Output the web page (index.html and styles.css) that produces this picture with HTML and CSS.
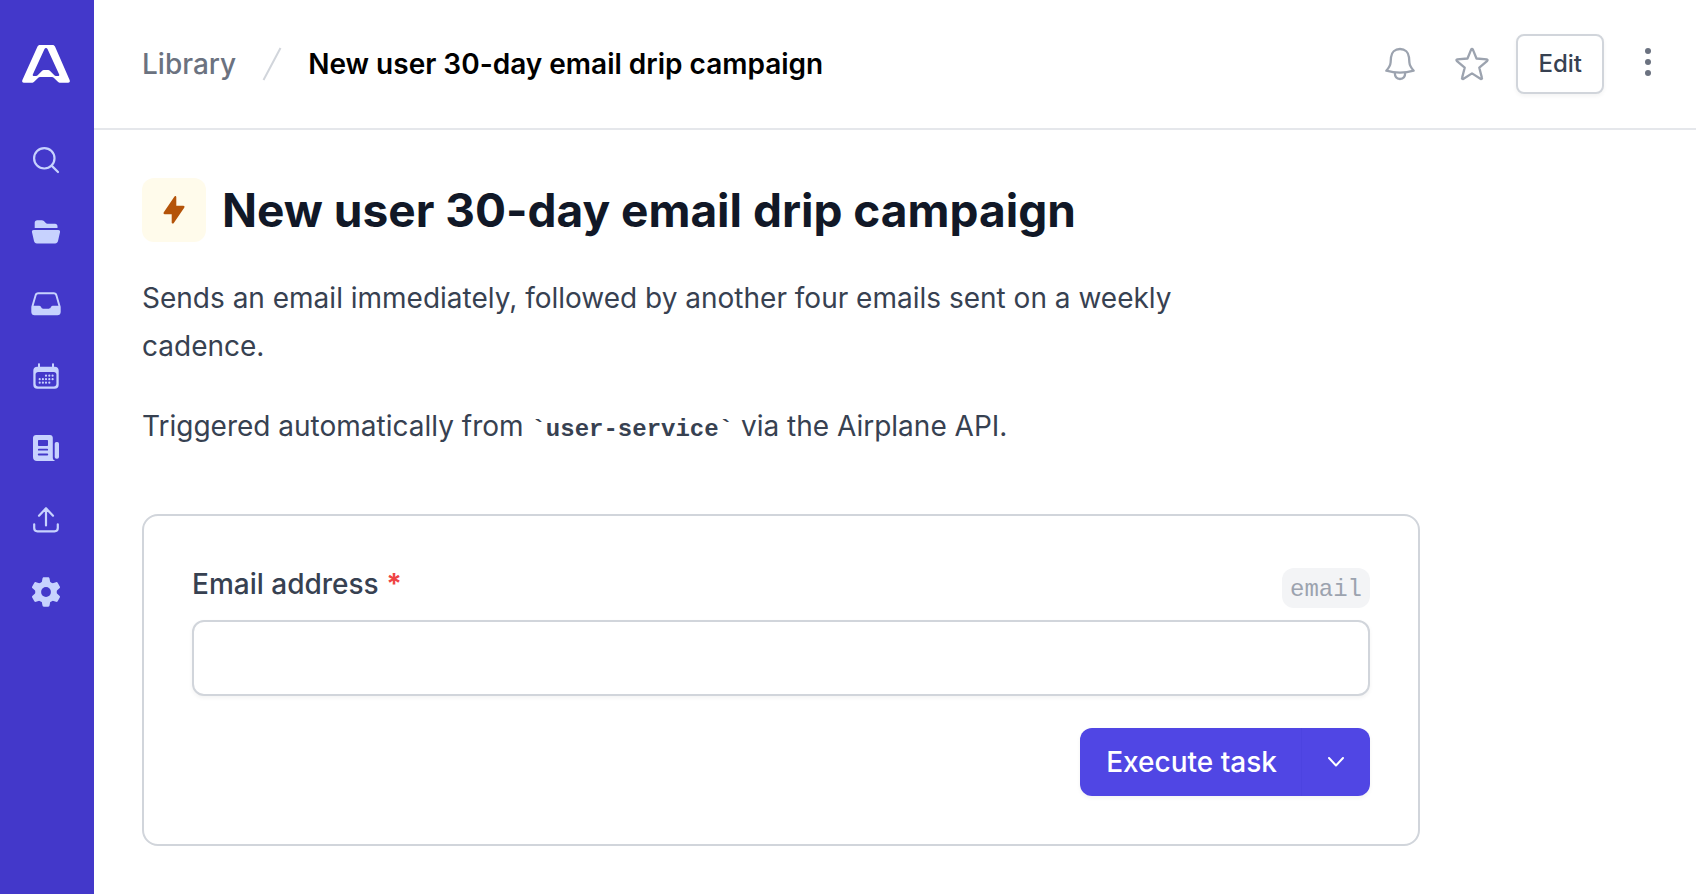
FILE: index.html
```html
<!DOCTYPE html>
<html lang="en">
<head>
  <meta charset="UTF-8">
  <meta name="viewport" content="width=device-width, initial-scale=1">
  <title>New user 30-day email drip campaign</title>
  <link rel="stylesheet" href="styles.css">
</head>
<body>
  <div class="app">
    <!-- Sidebar -->
    <nav class="sidebar" aria-label="Main">
      <a class="logo" href="#" aria-label="Home">
        <svg width="48" height="40" viewBox="0 0 48 40" fill="currentColor">
          <path fill-rule="evenodd" d="M18 1h12.500c1.200 0 2 .6 2.600 1.700L47.600 36c.7 1.600 0 2.700-1.600 2.700h-7.500c-1.300 0-2-.3-2.900-1.200L32 34c-.8-.8-1.500-1-2.600-1H18.600c-1.100 0-1.800.2-2.600 1l-3.600 3.500c-.9.900-1.600 1.200-2.900 1.200H2c-1.600 0-2.300-1.100-1.600-2.700L15.400 2.700C16 1.600 16.800 1 18 1zM22.500 5 10.800 30.500c-.4.9.2 1.500 1.200 1.500h2c.8 0 1.300-.3 1.900-.9l4-4.200c.6-.6 1.200-.9 2-.9h4.200c.8 0 1.400.3 2 .9l4 4.200c.6.6 1.100.9 1.900.9h2c1 0 1.600-.6 1.200-1.500L25.500 5c-.6-1.300-2.400-1.300-3 0z"/>
        </svg>
      </a>
      <a class="nav-item" href="#" aria-label="Search">
        <svg viewBox="0 0 32 32" fill="none" stroke="currentColor" stroke-width="2.200" stroke-linecap="round">
          <circle cx="14.300" cy="14.300" r="10.200"/>
          <path d="M21.600 21.600l6.400 6.400"/>
        </svg>
      </a>
      <a class="nav-item" href="#" aria-label="Library">
        <svg viewBox="0 0 32 32" fill="currentColor">
          <path d="M4.700 12V6.800c0-1.500 1-2.500 2.500-2.500h4.600c.9 0 1.500.2 2.100.8l1.900 1.900c.4.400.9.700 1.600.7h7.600c1.500 0 2.500 1 2.500 2.500V12z"/>
          <path d="M3.800 14h24.400c1.400 0 2.100.9 1.800 2.200l-2 8.900c-.4 1.600-1.300 2.400-2.900 2.400H6.900c-1.600 0-2.500-.8-2.900-2.400l-2-8.900C1.700 14.900 2.400 14 3.800 14z"/>
        </svg>
      </a>
      <a class="nav-item" href="#" aria-label="Inbox">
        <svg viewBox="0 0 32 32" fill="currentColor">
          <path fill-rule="evenodd" d="M8.300 4.300h15.400c1.900 0 3.200 1 3.600 2.800l3.100 10.700c.2.500.3 1 .3 1.500V24c0 2-1.300 3.300-3.300 3.300H4.600c-2 0-3.300-1.300-3.300-3.300v-4.700c0-.5.100-1 .3-1.500L4.700 7.100c.4-1.800 1.700-2.800 3.600-2.800zm.2 2c-1.100 0-1.800.5-2.100 1.600L3.600 17.700h5.600c.8 0 1.300.3 1.700 1l.6 1.100c.4.700.9.900 1.700.9h5.600c.8 0 1.300-.2 1.700-.9l.6-1.100c.4-.7.9-1 1.700-1h5.600L25.600 7.900c-.3-1.100-1-1.600-2.100-1.600z"/>
        </svg>
      </a>
      <a class="nav-item" href="#" aria-label="Schedules">
        <svg viewBox="0 0 32 32" fill="currentColor">
          <path fill-rule="evenodd" d="M9 3.300c.6 0 1 .4 1 1v2.400h12V4.300c0-.6.400-1 1-1s1 .4 1 1v2.400h.700c2.500 0 4 1.500 4 4v14c0 2.500-1.500 4-4 4H7.300c-2.500 0-4-1.500-4-4v-14c0-2.500 1.500-4 4-4H8V4.300c0-.6.4-1 1-1zM8.200 12c-1.600 0-2.600 1-2.600 2.600v9.100c0 1.600 1 2.700 2.600 2.700h15.600c1.600 0 2.600-1.100 2.600-2.700v-9.100c0-1.600-1-2.600-2.600-2.600z"/>
          <path fill="none" stroke="currentColor" stroke-width="2.200" stroke-linecap="round" d="M16 15.700h0M19.300 15.700h0M22.600 15.700h0M9.700 19.200h0M12.900 19.200h0M16 19.200h0M19.300 19.200h0M22.600 19.200h0M9.700 22.700h0M12.900 22.700h0M16 22.700h0M19.300 22.700h0"/>
        </svg>
      </a>
      <a class="nav-item" href="#" aria-label="Activity">
        <svg viewBox="0 0 32 32" fill="currentColor">
          <path fill-rule="evenodd" d="M6 3h14c1.700 0 2.800 1.100 2.800 2.800v20c0 1.500.9 2.500 2.400 3.200H7c-2.500 0-4-1.500-4-4V5.800C3 4.100 4.300 3 6 3zM9 8c-.6 0-1 .4-1 1v4c0 .6.4 1 1 1h8c.6 0 1-.4 1-1V9c0-.6-.4-1-1-1zm-.2 8.800a.9.900 0 000 1.800h8.400a.9.900 0 000-1.800zm0 4.700a1 1 0 000 2h8.400a1 1 0 000-2z"/>
          <rect x="24.700" y="10" width="4.300" height="16.700" rx="1.800"/>
        </svg>
      </a>
      <a class="nav-item" href="#" aria-label="Upload">
        <svg viewBox="0 0 32 32" fill="none" stroke="currentColor" stroke-width="2.200" stroke-linecap="round" stroke-linejoin="round">
          <path d="M16 21.500V4.300M9 11.700l7-7.400 7 7.400M4.200 20.300V24c0 2 1.300 3.300 3.300 3.300h17c2 0 3.300-1.300 3.300-3.300v-3.700"/>
        </svg>
      </a>
      <a class="nav-item" href="#" aria-label="Settings">
        <svg viewBox="0 0 32 32">
          <path fill="none" stroke="currentColor" stroke-width="7" d="M23.300 16a7.300 7.300 0 10-14.600 0 7.300 7.300 0 0014.600 0z"/>
          <g fill="currentColor">
            <path id="tooth" d="M11.500 7.500l1-5c.2-.8.600-1.200 1.400-1.200h4.200c.8 0 1.200.4 1.400 1.200l1 5-2 2h-5z"/>
            <use href="#tooth" transform="rotate(60 16 16)"/>
            <use href="#tooth" transform="rotate(120 16 16)"/>
            <use href="#tooth" transform="rotate(180 16 16)"/>
            <use href="#tooth" transform="rotate(240 16 16)"/>
            <use href="#tooth" transform="rotate(300 16 16)"/>
          </g>
          <circle class="gear-hole" cx="16" cy="16" r="4.900"/>
        </svg>
      </a>
    </nav>

    <div class="main">
      <!-- Header -->
      <header class="header">
        <div class="breadcrumbs">
          <a class="crumb" href="#">Library</a>
          <svg class="slash" width="20" height="32" viewBox="0 0 20 32" fill="none" stroke="currentColor" stroke-width="2">
            <path d="M18.500 0 1.500 32"/>
          </svg>
          <span class="crumb-current">New user 30-day email drip campaign</span>
        </div>
        <div class="actions">
          <div class="toggles">
            <button class="icon-button" type="button" aria-label="Notifications">
              <svg viewBox="0 0 32 32" fill="none" stroke="currentColor" stroke-width="2.300" stroke-linejoin="round">
                <path d="M16 1c5 0 8.600 3.300 9 8.300l.4 5.200c.2 3 1.200 4.700 4.300 8.200-9 2.600-18.400 2.600-27.400 0 3.100-3.500 4.100-5.200 4.300-8.200L7 9.300C7.400 4.300 11 1 16 1z"/>
                <path d="M10.800 24.600c0 3.800 1.900 6.400 5.200 6.400s5.200-2.600 5.200-6.400"/>
              </svg>
            </button>
            <button class="icon-button" type="button" aria-label="Star">
              <svg viewBox="0 0 32 32" fill="none" stroke="currentColor" stroke-width="2.300" stroke-linejoin="round">
                <path d="M15.200 1.400c.3-.6 1.300-.6 1.600 0l3.700 9.100 10.300.8c.8.100 1 1 .5 1.500l-8 6.900 2.700 10.400c.2.700-.6 1.200-1.200.9L16 25.400 7.200 31c-.6.300-1.400-.2-1.200-.9l2.700-10.400-8-6.900c-.5-.5-.3-1.400.5-1.500l10.300-.8z"/>
              </svg>
            </button>
          </div>
          <button class="edit-button" type="button">Edit</button>
          <button class="icon-button more" type="button" aria-label="More">
            <svg viewBox="0 0 32 32" fill="currentColor">
              <circle cx="16" cy="3" r="3"/>
              <circle cx="16" cy="14" r="3"/>
              <circle cx="16" cy="25" r="3"/>
            </svg>
          </button>
        </div>
      </header>

      <!-- Task -->
      <main class="content">
        <div class="title-row">
          <span class="task-icon">
            <svg width="32" height="32" viewBox="0 0 32 32" fill="currentColor">
              <path d="M16.300 2.700c.7-1 2-.7 2 .5v8.600h7c1.100 0 1.600.9.900 1.900L15.800 29c-.7 1-2.100.7-2.100-.5v-8.300h-7c-1.100 0-1.600-.9-.9-1.900z"/>
            </svg>
          </span>
          <h1>New user 30-day email drip campaign</h1>
        </div>

        <div class="description">
          <p>Sends an email immediately, followed by another four emails sent on a weekly cadence.</p>
          <p>Triggered automatically from <code>`user-service`</code> via the Airplane API.</p>
        </div>

        <form class="card">
          <div class="field-head">
            <label for="email">Email address <span class="required">*</span></label>
            <code class="slug">email</code>
          </div>
          <input class="text-input" type="text" id="email" required>
          <div class="form-actions">
            <div class="split-button">
              <button class="execute" type="button">Execute task</button>
              <button class="dropdown" type="button" aria-label="More options">
                <svg width="16" height="10" viewBox="0 0 16 10" fill="none" stroke="currentColor" stroke-width="2" stroke-linecap="round" stroke-linejoin="round">
                  <path d="M1 1l7 7.500L15 1"/>
                </svg>
              </button>
            </div>
          </div>
        </form>
      </main>
    </div>
  </div>
</body>
</html>
```
FILE: styles.css
```css
:root {
  /* Colors */
  --indigo-dark: #4338ca;
  --indigo: #5046e4;
  --indigo-light: #c7d2fe;
  --gray-900: #111827;
  --gray-700: #374151;
  --gray-500: #6b7280;
  --gray-400: #9ca3af;
  --gray-300: #d1d5db;
  --gray-200: #e5e7eb;
  --gray-100: #f3f4f6;

  /* Typography */
  --font-body: Inter, sans-serif;
  --font-mono: "Liberation Mono", monospace;
  --font-size-body: 28px;
  --font-size-small: 24px;
}

* {
  box-sizing: border-box;
}

body {
  margin: 0;
  background: #fff;
  color: var(--gray-700);
  font-family: var(--font-body);
  font-size: var(--font-size-body);
  line-height: 40px;
}

a {
  color: inherit;
  text-decoration: none;
}

button {
  font: inherit;
  cursor: pointer;
}

svg {
  display: block;
  overflow: visible;
}

.app {
  display: flex;
  min-height: 100vh;
}

/* Sidebar */
.sidebar {
  width: 94px;
  flex-shrink: 0;
  background: var(--indigo-dark);
  color: var(--indigo-light);
  display: flex;
  flex-direction: column;
  align-items: center;
  gap: 40px;
  padding: 44px 2px 40px 0;
}
.logo {
  color: #fff;
  margin-bottom: 20px;
}
.nav-item svg {
  width: 32px;
  height: 32px;
}
.gear-hole {
  fill: var(--indigo-dark);
}

.main {
  flex: 1;
  min-width: 0;
}

/* Header */
.header {
  display: flex;
  align-items: center;
  justify-content: space-between;
  padding: 34px 24px 34px 48px;
  border-bottom: 2px solid var(--gray-200);
}
.breadcrumbs {
  display: flex;
  align-items: center;
  gap: 26px;
}
.crumb {
  color: var(--gray-500);
  font-weight: 500;
}
.slash {
  color: var(--gray-300);
}
.crumb-current {
  color: #000;
  font-weight: 600;
}
.actions {
  display: flex;
  align-items: center;
  gap: 20px;
}
.toggles {
  display: flex;
  gap: 24px;
}
.icon-button {
  padding: 8px;
  border: none;
  background: none;
  color: var(--gray-400);
}
.icon-button svg {
  width: 32px;
  height: 32px;
}
.icon-button.more {
  color: var(--gray-500);
}
.edit-button {
  height: 60px;
  padding: 0 20px;
  border: 2px solid var(--gray-300);
  border-radius: 8px;
  background: #fff;
  color: var(--gray-700);
  font-size: var(--font-size-small);
  font-weight: 500;
  box-shadow: 0 2px 4px rgba(0, 0, 0, 0.05);
}

/* Task */
.content {
  padding: 48px;
}
.title-row {
  display: flex;
  align-items: center;
  gap: 16px;
}
.task-icon {
  padding: 16px;
  border-radius: 12px;
  background: #fffbeb;
  color: #b45309;
}
h1 {
  margin: 0;
  color: var(--gray-900);
  font-size: 46px;
  font-weight: 700;
  line-height: 64px;
}
.description {
  max-width: 1100px;
  margin: 32px 0 64px;
  line-height: 48px;
}
.description p {
  margin: 0 0 32px;
}
.description p:last-child {
  margin-bottom: 0;
}
code {
  font-family: var(--font-mono);
  font-size: var(--font-size-small);
}
.description code {
  font-weight: 600;
  line-height: 24px;
}

/* Form card */
.card {
  max-width: 1278px;
  padding: 48px;
  border: 2px solid var(--gray-300);
  border-radius: 16px;
}
.field-head {
  display: flex;
  align-items: flex-start;
  justify-content: space-between;
  margin-bottom: 12px;
  font-weight: 500;
}
.required {
  color: #ef4444;
  font-weight: 700;
}
.slug {
  margin-top: 4px;
  padding: 4px 8px 0;
  border-radius: 12px;
  background: var(--gray-100);
  color: var(--gray-400);
  font-weight: 400;
  line-height: 36px;
}
.text-input {
  display: block;
  width: 100%;
  height: 76px;
  padding: 0 24px;
  border: 2px solid var(--gray-300);
  border-radius: 12px;
  background: #fff;
  font: inherit;
  box-shadow: 0 2px 4px rgba(0, 0, 0, 0.05);
}
.form-actions {
  display: flex;
  justify-content: flex-end;
  margin-top: 32px;
}
.split-button {
  display: flex;
  border-radius: 12px;
  overflow: hidden;
  box-shadow: 0 2px 4px rgba(0, 0, 0, 0.05);
}
.split-button button {
  height: 68px;
  border: none;
  background: var(--indigo);
  color: #fff;
  font-weight: 500;
}
.split-button .execute {
  padding: 0 24px 0 26px;
}
.split-button .dropdown {
  padding: 0 26px;
  border-left: 1px solid #4c43e0;
}
```
